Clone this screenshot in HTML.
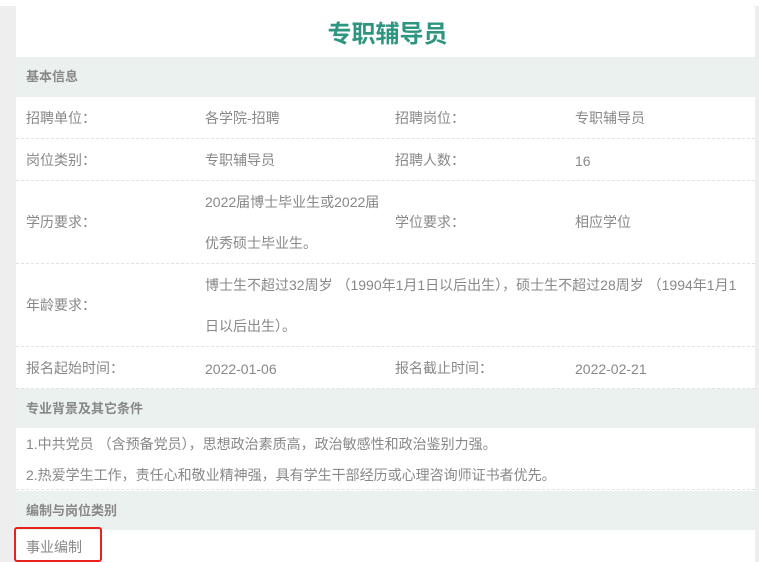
<html><head><style>
body{margin:0;width:759px;height:562px;overflow:hidden;background:#fff;font-family:"Liberation Sans","Noto Sans CJK SC",sans-serif;position:relative}
.gl{position:absolute;left:0;top:6px;width:16px;height:556px;background:#eeeeee}
.gr{position:absolute;left:755px;top:6px;width:4px;height:556px;background:#eeeeee}
.t{position:absolute;left:18px;width:739px;top:14px;text-align:center;font-size:24px;font-weight:bold;color:#2e9680}
.h{position:absolute;left:16px;width:739px;background:#ebf1ef;color:#888;font-size:13px;font-weight:bold;box-sizing:border-box;padding-left:10px}
.r{position:absolute;left:16px;width:739px;border-bottom:1px dashed #e2e2e2;box-sizing:border-box}
.x{position:absolute;font-size:14px;color:#888;white-space:nowrap;line-height:20px}
</style></head><body>
<div class="gl"></div><div class="gr"></div>
<div class="t">专职辅导员</div>
<div class="h" style="top:57px;height:40px;line-height:40px">基本信息</div>
<div class="r" style="top:97px;height:42px"></div>
<div class="r" style="top:139px;height:42px"></div>
<div class="r" style="top:181px;height:83px"></div>
<div class="r" style="top:264px;height:83px"></div>
<div class="r" style="top:347px;height:42px"></div>
<div class="x" style="left:26px;top:108px">招聘单位：</div><div class="x" style="left:205px;top:108px">各学院-招聘</div><div class="x" style="left:395px;top:108px">招聘岗位：</div><div class="x" style="left:575px;top:108px">专职辅导员</div>
<div class="x" style="left:26px;top:150px">岗位类别：</div><div class="x" style="left:205px;top:150px">专职辅导员</div><div class="x" style="left:395px;top:150px">招聘人数：</div><div class="x" style="left:575px;top:151px">16</div>
<div class="x" style="left:26px;top:212px">学历要求：</div><div class="x" style="left:205px;top:192px">2022届博士毕业生或2022届</div><div class="x" style="left:205px;top:233px">优秀硕士毕业生。</div><div class="x" style="left:395px;top:212px">学位要求：</div><div class="x" style="left:575px;top:212px">相应学位</div>
<div class="x" style="left:26px;top:295px">年龄要求：</div><div class="x" style="left:205px;top:275px">博士生不超过32周岁 （1990年1月1日以后出生），硕士生不超过28周岁 （1994年1月1</div><div class="x" style="left:205px;top:316px">日以后出生）。</div>
<div class="x" style="left:26px;top:358px">报名起始时间：</div><div class="x" style="left:205px;top:359px">2022-01-06</div><div class="x" style="left:395px;top:358px">报名截止时间：</div><div class="x" style="left:575px;top:359px">2022-02-21</div>
<div class="h" style="top:389px;height:39px;line-height:39px">专业背景及其它条件</div>
<div class="r" style="top:428px;height:62px"></div>
<div class="x" style="left:26px;top:434px">1.中共党员 （含预备党员），思想政治素质高，政治敏感性和政治鉴别力强。</div>
<div class="x" style="left:26px;top:465px">2.热爱学生工作，责任心和敬业精神强，具有学生干部经历或心理咨询师证书者优先。</div>
<div class="h" style="top:491px;height:39px;line-height:39px">编制与岗位类别</div>
<div class="x" style="left:26px;top:537px">事业编制</div>
<div style="position:absolute;left:14px;top:527px;width:84px;height:31px;border:2px solid #e8211c;border-radius:3px"></div>
</body></html>
